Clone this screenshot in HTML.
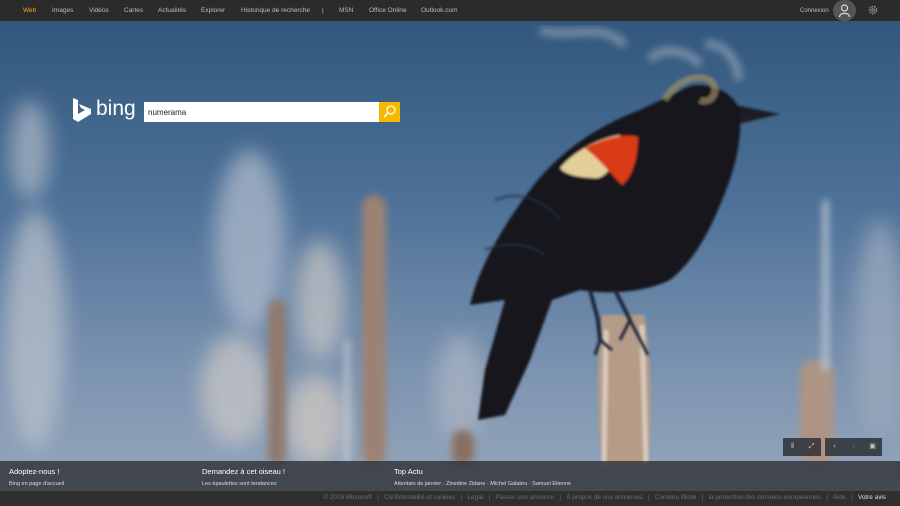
<!DOCTYPE html>
<html><head><meta charset="utf-8">
<style>
*{margin:0;padding:0;box-sizing:border-box}
html,body{width:900px;height:506px;overflow:hidden;font-family:"Liberation Sans",sans-serif;background:#2b2b2b}
#bg{position:absolute;left:0;top:0;width:900px;height:506px}
.top{position:absolute;left:0;top:0;width:900px;height:21px;background:#2b2b2b;font-size:6.5px;color:#bdbdbd}
.top span{position:absolute;top:7px}
.logo{position:absolute;color:#fff}
.search{position:absolute;left:144px;top:102px;width:235px;height:20px;background:#fff;font-size:8px;color:#222;padding:6px 4px}
.sbtn{position:absolute;left:379px;top:102px;width:21px;height:20px;background:#f7b800}
.info{position:absolute;left:0;top:461px;width:900px;height:30px;background:rgba(45,48,54,.8);color:#fff}
.info b{position:absolute;top:6px;font-weight:normal;font-size:7.5px}
.info i{position:absolute;top:20px;font-style:normal;font-size:5.5px;color:#ddd}
.foot{position:absolute;left:0;top:491px;width:900px;height:15px;background:#2f2f2f;color:#6e6e6e;font-size:6.4px;text-align:right;padding:3px 14px 0 0;white-space:nowrap}
.ctrl{position:absolute;top:438px;width:19px;height:18px;background:rgba(45,48,54,.85);color:#ccc;font-size:7px;text-align:center;line-height:18px}
</style></head><body>
<svg id="bg" viewBox="0 0 900 506">
<defs>
<linearGradient id="sky" x1="0" y1="0" x2="0" y2="1">
<stop offset="0" stop-color="#2f5479"/><stop offset=".4" stop-color="#4d7198"/><stop offset=".75" stop-color="#7e95b1"/><stop offset="1" stop-color="#98a8bc"/></linearGradient>
<filter id="b8"><feGaussianBlur stdDeviation="10"/></filter>
<filter id="b4"><feGaussianBlur stdDeviation="4"/></filter>
<filter id="b2"><feGaussianBlur stdDeviation="1.2"/></filter>
</defs>
<rect width="900" height="506" fill="url(#sky)"/>
<g filter="url(#b8)" opacity=".75">
<ellipse cx="30" cy="150" rx="20" ry="50" fill="#aab6c4"/>
<ellipse cx="35" cy="330" rx="30" ry="120" fill="#b8c0ca"/>
<ellipse cx="250" cy="240" rx="35" ry="90" fill="#aebaca"/>
<ellipse cx="235" cy="390" rx="35" ry="55" fill="#c8c6c6"/>
<ellipse cx="320" cy="300" rx="25" ry="60" fill="#c4c2c2"/>
<ellipse cx="315" cy="420" rx="30" ry="45" fill="#d0c8c2"/>
<ellipse cx="460" cy="390" rx="25" ry="55" fill="#aab4c2"/>
<ellipse cx="880" cy="330" rx="25" ry="110" fill="#9cabbd"/>
</g>
<g filter="url(#b4)">
<rect x="362" y="195" width="24" height="270" rx="12" fill="#9c8274"/>
<rect x="268" y="300" width="18" height="165" rx="9" fill="#907a6e"/>
<rect x="800" y="360" width="34" height="105" rx="14" fill="#ad9484"/>
<rect x="452" y="430" width="22" height="35" rx="10" fill="#8a7062"/>
<rect x="823" y="200" width="5" height="170" fill="#c6ced8"/>
<rect x="345" y="340" width="4" height="125" fill="#cdd2d8"/>
</g>
<g filter="url(#b2)">
<path d="M602 315 C 596 360 598 420 602 465 L 648 465 C 652 420 652 360 644 315 Z" fill="#b59c88"/>
<path d="M606 330 L604 465 M642 325 L646 465" stroke="#e6ddd2" stroke-width="5" opacity=".7"/>
</g>
<g filter="url(#b2)">
<path d="M735 105 L780 114 L738 124 Z" fill="#1a1c24"/>
<path d="M690 86 C 715 82 736 95 740 112 C 742 140 735 170 722 200 C 710 230 695 260 670 280 C 645 292 610 295 580 290 L 552 300 L 530 360 L 505 415 L 478 420 L 485 370 L 505 300 L 470 305 C 478 270 500 230 530 190 C 560 150 600 125 640 110 Z" fill="#12141b"/>
<path d="M560 168 C 575 150 600 138 620 135 C 620 155 610 175 598 178 C 580 178 565 175 560 168 Z" fill="#e3cf9a"/>
<path d="M585 148 C 605 138 625 133 638 137 C 638 158 632 178 622 185 C 612 175 600 160 585 148 Z" fill="#d83a12"/>
<path d="M495 200 C 520 190 545 200 560 220 M485 250 C 510 240 530 245 545 255" stroke="#253246" stroke-width="3" fill="none" opacity=".6"/>
<path d="M590 290 L598 320 L600 340 M615 290 L630 320" stroke="#1c2538" stroke-width="4" fill="none"/>
<path d="M600 340 L595 355 M600 340 L612 350 M630 320 L648 355 M630 320 L620 340" stroke="#1c2538" stroke-width="3"/>
<path d="M665 100 C 675 80 700 72 712 82 C 720 92 710 105 700 100" stroke="#9c8c62" stroke-width="7" fill="none" opacity=".7"/>
</g>
<g filter="url(#b4)" opacity=".4">
<path d="M650 60 C 660 45 690 50 700 65 M705 45 C 720 40 740 60 738 80 M540 30 C 570 40 600 20 625 45" stroke="#e0e2e6" stroke-width="8" fill="none"/>
</g>
</svg>

<div class="top">
<span style="left:23px;color:#f5a623">Web</span>
<span style="left:52px">Images</span>
<span style="left:89px">Vidéos</span>
<span style="left:124px">Cartes</span>
<span style="left:158px">Actualités</span>
<span style="left:201px">Explorer</span>
<span style="left:241px">Historique de recherche</span>
<span style="left:322px">|</span>
<span style="left:339px">MSN</span>
<span style="left:369px">Office Online</span>
<span style="left:421px">Outlook.com</span>
<span style="left:800px;top:8px;font-size:6px">Connexion</span>
</div>
<div style="position:absolute;left:833px;top:0;width:23px;height:21px;border-radius:12px;background:#555"></div>
<svg style="position:absolute;left:838px;top:3px" width="13" height="15" viewBox="0 0 13 15"><circle cx="6.5" cy="5" r="3" fill="none" stroke="#ddd" stroke-width="1.2"/><path d="M1.5 14 C1.5 9 11.5 9 11.5 14" fill="none" stroke="#ddd" stroke-width="1.2"/></svg>
<svg style="position:absolute;left:868px;top:5px" width="10" height="10" viewBox="0 0 10 10"><circle cx="5" cy="5" r="3.5" fill="none" stroke="#999" stroke-width="1.5" stroke-dasharray="1.5 1"/><circle cx="5" cy="5" r="1.3" fill="none" stroke="#999"/></svg>

<svg style="position:absolute;left:72px;top:98px" width="20" height="25" viewBox="0 0 20 25"><path d="M1 0 L6 2 L6 16 L13 12 L9 10 L7 6 L19 11 L19 16 L6 24 L1 21 Z" fill="#fff"/></svg>
<div class="logo" style="left:96px;top:97px;font-size:21px">bing</div>
<div class="search">numerama</div>
<div class="sbtn"><svg width="21" height="20" viewBox="0 0 21 20"><circle cx="12" cy="8" r="4" fill="none" stroke="#fff" stroke-width="1.3"/><path d="M9 11 L5 15" stroke="#fff" stroke-width="1.5"/></svg></div>

<div class="ctrl" style="left:783px">⦀</div>
<div class="ctrl" style="left:802px">⤢</div>
<div class="ctrl" style="left:825px">‹</div>
<div class="ctrl" style="left:844px;color:#777">›</div>
<div class="ctrl" style="left:863px">▣</div>

<div class="info">
<b style="left:9px">Adoptez-nous !</b><i style="left:9px">Bing en page d'accueil</i>
<b style="left:202px">Demandez à cet oiseau !</b><i style="left:202px">Les épaulettes sont tendances</i>
<b style="left:394px">Top Actu</b><i style="left:394px">Attentats de janvier · Zinedine Zidane · Michel Galabru · Samuel Etienne</i>
</div>
<div class="foot">© 2016 Microsoft &nbsp;&nbsp;|&nbsp;&nbsp; Confidentialité et cookies &nbsp;&nbsp;|&nbsp;&nbsp; Légal &nbsp;&nbsp;|&nbsp;&nbsp; Passer une annonce &nbsp;&nbsp;|&nbsp;&nbsp; À propos de nos annonces &nbsp;&nbsp;|&nbsp;&nbsp; Contenu illicite &nbsp;&nbsp;|&nbsp;&nbsp; la protection des données européennes &nbsp;&nbsp;|&nbsp;&nbsp; Aide &nbsp;&nbsp;|&nbsp;&nbsp; <span style="color:#ddd">Votre avis</span></div>
</body></html>
